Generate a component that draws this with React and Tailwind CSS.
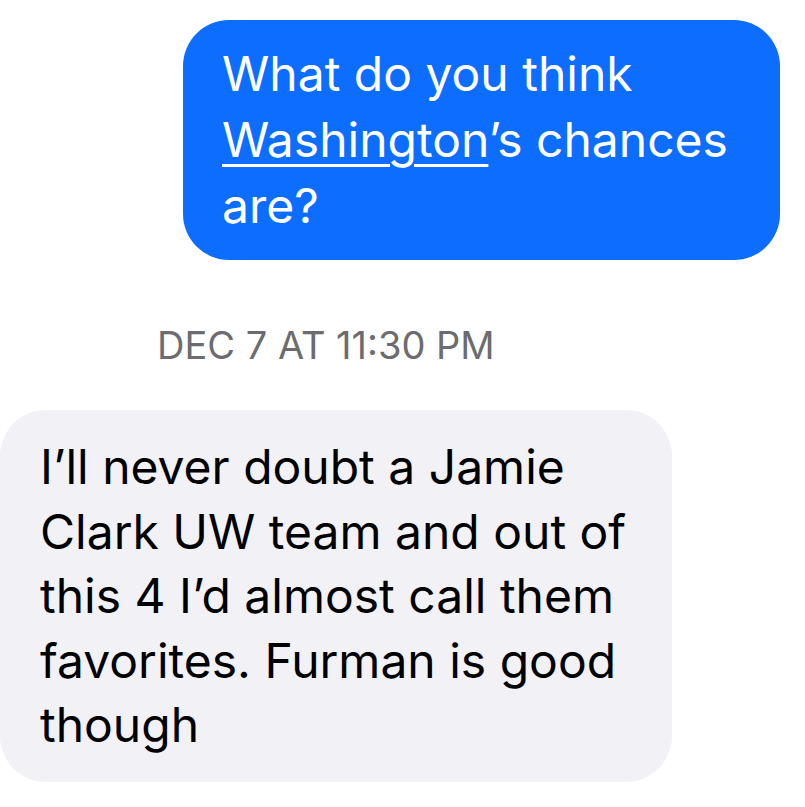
import React from 'react';

export default function App() {
  return (
    <div className="w-[805px] h-[807px] bg-white overflow-hidden font-['Inter','Roboto',sans-serif]">
      {/* outgoing */}
      <div className="flex justify-end pt-[20px] pr-[25px]">
        <div className="w-[597px] h-[240px] rounded-[46px] bg-[#0c6dff] px-[39px] py-[21px] text-white text-[48px] leading-[66px] whitespace-nowrap">
          What do you think
          <br />
          <span className="underline decoration-[3px] underline-offset-[7px]">Washington</span>’s chances
          <br />
          are?
        </div>
      </div>

      {/* timestamp */}
      <div className="pl-[157px] mt-[62px] h-[46px] text-[38px] leading-[46px] text-[#6c6c70] whitespace-nowrap">
        DEC 7 AT 11:30 PM
      </div>

      {/* incoming */}
      <div className="mt-[42px]">
        <div className="w-[672px] h-[372px] rounded-[46px] bg-[#f1f1f6] px-[40px] py-[25px] text-black text-[48px] leading-[64.5px] whitespace-nowrap">
          I’ll never doubt a Jamie
          <br />
          Clark UW team and out of
          <br />
          this 4 I’d almost call them
          <br />
          favorites. Furman is good
          <br />
          though
        </div>
      </div>
    </div>
  );
}
